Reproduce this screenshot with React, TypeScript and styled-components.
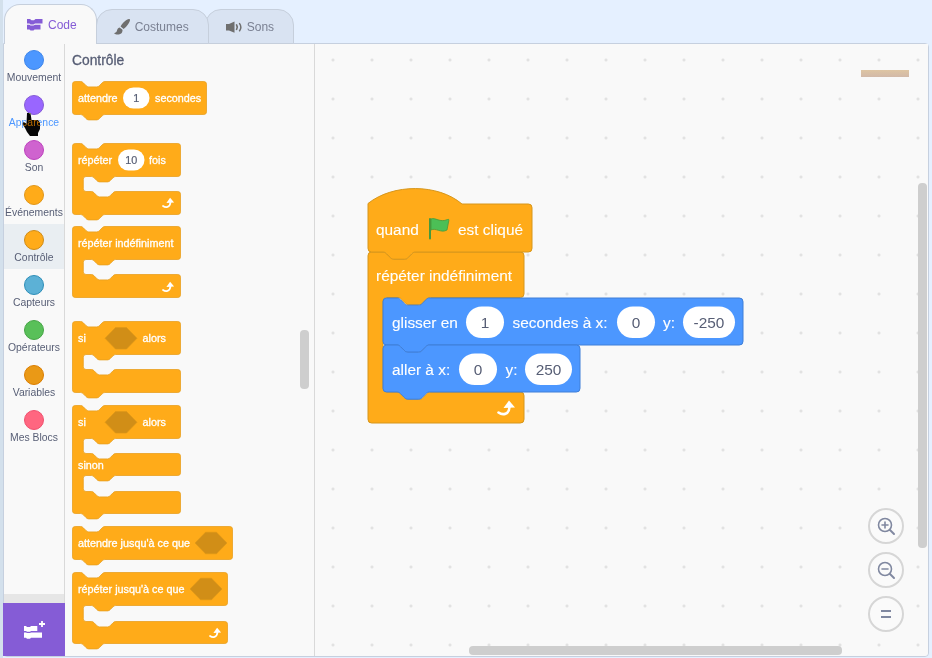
import React from "react";
import styled, { createGlobalStyle } from "styled-components";

const Global = createGlobalStyle`
  html, body { margin: 0; padding: 0; background: #e5f0ff; overflow: hidden; }
  * { box-sizing: border-box; }
`;

const FONT = `"Liberation Sans", Arial, Helvetica, sans-serif`;

const Page = styled.div`
  position: relative;
  width: 932px;
  height: 658px;
  display: flex;
  flex-direction: column;
  padding: 4px 3px 1px 0;
  border-left: 3px solid #d3e0ec;
  background: #e5f0ff;
  font-family: ${FONT};
  overflow: hidden;
`;
const TabBar = styled.div`
  display: flex;
  height: 39px;
  flex: none;
  padding-left: 1px;
  align-items: flex-end;
`;
const Tab = styled.div<{ $active?: boolean; $pl: number; $z: number; $ml: number }>`
  position: relative;
  z-index: ${(p) => p.$z};
  margin-left: ${(p) => p.$ml}px;
  height: ${(p) => (p.$active ? 40 : 35)}px;
  margin-bottom: -1px;
  padding: 0 19px 0 ${(p) => p.$pl}px;
  display: flex;
  align-items: center;
  gap: 5px;
  border: 1px solid #c6cfdc;
  border-bottom: ${(p) => (p.$active ? "none" : "1px solid #c6cfdc")};
  border-radius: 16px 16px 0 0;
  background: ${(p) => (p.$active ? "#f9f9f9" : "#d9e3f2")};
  color: ${(p) => (p.$active ? "#855cd6" : "#7a8092")};
  font-size: 12px;
  line-height: 14px;
`;
const TabIcon = styled.svg`
  width: 16px;
  height: 18px;
  flex: none;
`;
const Panel = styled.div`
  flex: 1;
  min-height: 0;
  display: grid;
  grid-template-columns: 61px 250px 1fr;
  border: 1px solid #c6d0df;
  border-radius: 0 4px 4px 4px;
  background: #f9f9f9;
`;
const CategoryColumn = styled.div`
  display: flex;
  flex-direction: column;
  border-right: 1px solid #d9d9d9;
  min-height: 0;
`;
const CategoryRow = styled.div<{ $selected?: boolean }>`
  height: 45px;
  flex: none;
  padding-top: 6px;
  display: flex;
  flex-direction: column;
  align-items: center;
  gap: 2px;
  background: ${(p) => (p.$selected ? "#e9eef2" : "transparent")};
`;
const CategoryDot = styled.div<{ $fill: string; $line: string }>`
  width: 20px;
  height: 20px;
  flex: none;
  border-radius: 50%;
  background: ${(p) => p.$fill};
  border: 1px solid ${(p) => p.$line};
`;
const CategoryLabel = styled.div<{ $hover?: boolean }>`
  font-size: 10.4px;
  line-height: 12px;
  white-space: nowrap;
  color: ${(p) => (p.$hover ? "#4c97ff" : "#575e75")};
`;
const Spacer = styled.div`
  flex: 1;
`;
const ExtensionTray = styled.div`
  height: 9px;
  flex: none;
  background: #e6e6e6;
`;
const ExtensionButton = styled.div`
  height: 53px;
  flex: none;
  margin: 0 -1px 0 -1px;
  background: #855cd6;
  display: flex;
  align-items: center;
  justify-content: center;
`;
const Palette = styled.div`
  position: relative;
  border-right: 1px solid #d9d9d9;
  padding: 9px 0 0 7px;
  display: flex;
  flex-direction: column;
  align-items: flex-start;
  overflow: hidden;
`;
const PaletteTitle = styled.div`
  height: 16px;
  font-size: 13.8px;
  line-height: 16px;
  color: #575e75;
  -webkit-text-stroke: 0.3px #575e75;
  margin-bottom: 12px;
`;
const PaletteItem = styled.svg<{ $gap: number }>`
  display: block;
  flex: none;
  overflow: visible;
  margin-top: ${(p) => p.$gap}px;
`;
const ScrollThumb = styled.div<{ $l: number; $t: number; $w: number; $h: number }>`
  position: absolute;
  left: ${(p) => p.$l}px;
  top: ${(p) => p.$t}px;
  width: ${(p) => p.$w}px;
  height: ${(p) => p.$h}px;
  border-radius: 4px;
  background: #cecece;
`;
const Workspace = styled.div`
  position: relative;
  overflow: hidden;
  background-color: #f9f9f9;
  background-image: radial-gradient(circle at center, #dcdcdc 1px, transparent 1.5px);
  background-size: 39px 39px;
  background-position: -1.5px -3.5px;
  border-radius: 0 0 4px 0;
`;
const Script = styled.svg`
  position: absolute;
  left: 53px;
  top: 136px;
  overflow: visible;
`;
const Backpack = styled.div`
  position: absolute;
  left: 546px;
  top: 26px;
  width: 48px;
  height: 7px;
  background: linear-gradient(#dec5a3, #d2b9a8);
`;
const ZoomStack = styled.div`
  position: absolute;
  left: 553px;
  top: 464px;
  display: flex;
  flex-direction: column;
  gap: 8px;
`;
const ZoomButton = styled.div`
  width: 36px;
  height: 36px;
  border-radius: 50%;
  border: 2px solid #d6d6d6;
  background: #fafafa;
  display: flex;
  align-items: center;
  justify-content: center;
`;
const ZoomIcon = styled.svg`
  width: 24px;
  height: 24px;
  fill: none;
  stroke: #8088a0;
  stroke-width: 1.6;
  stroke-linecap: round;
`;
const HandCursor = styled.svg`
  position: absolute;
  left: 19px;
  top: 113px;
  width: 18px;
  height: 23px;
  mix-blend-mode: difference;
`;
const Label = styled.text<{ $size: number }>`
  font-family: ${FONT};
  font-size: ${(p) => p.$size}px;
  fill: #fff;
  stroke: #fff;
  stroke-width: ${(p) => (p.$size < 12 ? 0.3 : 0.1)}px;
`;
const InputText = styled.text<{ $size: number }>`
  font-family: ${FONT};
  font-size: ${(p) => p.$size}px;
  fill: #575e75;
  stroke: #575e75;
  stroke-width: ${(p) => (p.$size < 12 ? 0.2 : 0)}px;
  text-anchor: middle;
`;

const P_SIZE = 10.8;
const W_SIZE = 15.4;

type Sec = { top: number; inner: number };
type Shape = {
  w: number;
  s: number;
  sections: Sec[];
  last?: number;
  bottomNotch?: boolean;
  hat?: boolean;
  ix?: number;
  off?: number;
};

const notchF = (n: number) =>
  `c${2 * n},0 ${3 * n},${1 * n} ${4 * n},${2 * n} l${4 * n},${4 * n} c${1 * n},${1 * n} ${2 * n},${2 * n} ${4 * n},${2 * n} h${12 * n} c${2 * n},0 ${3 * n},${-1 * n} ${4 * n},${-2 * n} l${4 * n},${-4 * n} c${1 * n},${-1 * n} ${2 * n},${-2 * n} ${4 * n},${-2 * n} `;
const notchB = (n: number) =>
  `c${-2 * n},0 ${-3 * n},${1 * n} ${-4 * n},${2 * n} l${-4 * n},${4 * n} c${-1 * n},${1 * n} ${-2 * n},${2 * n} ${-4 * n},${2 * n} h${-12 * n} c${-2 * n},0 ${-3 * n},${-1 * n} ${-4 * n},${-2 * n} l${-4 * n},${-4 * n} c${-1 * n},${-1 * n} ${-2 * n},${-2 * n} ${-4 * n},${-2 * n} `;

function blockPath({ w, s, sections, last = 0, bottomNotch = true, hat, ix = 16 * s, off = 12 * s }: Shape): string {
  const r = 4 * s;
  const n = s;
  const N = 36 * n;
  let d = "";
  if (hat) {
    d += `M0,15 C25,-5 70,-5 94,15.5 H${w - r} A${r},${r} 0 0 1 ${w},${15.5 + r} `;
  } else {
    d += `M0,${r} A${r},${r} 0 0 1 ${r},0 H${off} ${notchF(n)} H${w - r} A${r},${r} 0 0 1 ${w},${r} `;
  }
  let y = 0;
  sections.forEach((sec) => {
    y += sec.top;
    d += `V${y - r} A${r},${r} 0 0 1 ${w - r},${y} H${ix + off + N} ${notchB(n)} H${ix + r} A${r},${r} 0 0 0 ${ix},${y + r} `;
    y += sec.inner;
    d += `V${y - r} A${r},${r} 0 0 0 ${ix + r},${y} H${ix + off} ${notchF(n)} H${w - r} A${r},${r} 0 0 1 ${w},${y + r} `;
  });
  y += last;
  d += `V${y - r} A${r},${r} 0 0 1 ${w - r},${y} `;
  if (bottomNotch) d += `H${off + N} ${notchB(n)} `;
  d += `H${r} A${r},${r} 0 0 1 0,${y - r} Z`;
  return d;
}

const BlockBody: React.FC<Shape & { fill?: string; line?: string; lw?: number; x?: number; y?: number }> = ({
  fill = "#ffab19",
  line = "#e8a020",
  lw = 0.8,
  x = 0,
  y = 0,
  ...shape
}) => <path d={blockPath(shape)} transform={`translate(${x} ${y})`} fill={fill} stroke={line} strokeWidth={lw} />;

const Hex: React.FC<{ x: number; y: number }> = ({ x, y }) => (
  <polygon
    points={`${x},${y + 10.8} ${x + 10.5},${y} ${x + 21.5},${y} ${x + 32},${y + 10.8} ${x + 21.5},${y + 21.6} ${x + 10.5},${y + 21.6}`}
    fill="#d18e17"
    stroke="#dd9718"
    strokeWidth={0.6}
  />
);

const Pill: React.FC<{ x: number; y: number; w: number; h: number; text: string; size: number; baseline: number }> = ({
  x,
  y,
  w,
  h,
  text,
  size,
  baseline,
}) => (
  <g>
    <rect x={x} y={y} width={w} height={h} rx={h / 2} fill="#fff" />
    <InputText $size={size} x={x + w / 2} y={baseline}>
      {text}
    </InputText>
  </g>
);

const LoopArrow: React.FC<{ x: number; y: number; k?: number }> = ({ x, y, k = 0.675 }) => (
  <g transform={`translate(${x} ${y}) scale(${k})`}>
    <path d="M1.5,12.5 C5,15 12,15.5 12.5,7" fill="none" stroke="#fff" strokeWidth={2.6} strokeLinecap="round" />
    <path d="M6.5,8 L12,0.5 L18,7.5 Z" fill="#fff" />
  </g>
);

const PaletteBlock: React.FC<{ gap: number; w: number; h: number; children: React.ReactNode }> = ({ gap, w, h, children }) => (
  <PaletteItem $gap={gap} width={w + 1} height={h} viewBox={`-0.5 -0.5 ${w + 1} ${h}`}>
    {children}
  </PaletteItem>
);

const categories = [
  { name: "Mouvement", fill: "#4c97ff", line: "#3f86ea" },
  { name: "Apparence", fill: "#9966ff", line: "#855cd6", hover: true },
  { name: "Son", fill: "#cf63cf", line: "#bd42bd" },
  { name: "Événements", fill: "#ffab19", line: "#e0961a" },
  { name: "Contrôle", fill: "#ffab19", line: "#cf8b17", selected: true },
  { name: "Capteurs", fill: "#5cb1d6", line: "#2e8eb8" },
  { name: "Opérateurs", fill: "#59c059", line: "#46a546" },
  { name: "Variables", fill: "#ea9916", line: "#db7d00" },
  { name: "Mes Blocs", fill: "#ff6680", line: "#f0506e" },
];

export default function App() {
  const s = 0.675;
  const ws = 0.9;
  return (
    <>
      <Global />
      <Page>
        <TabBar>
          <Tab $active $pl={22} $z={3} $ml={0}>
            <TabIcon viewBox="0 -3 16 18">
              <path
                fill="#855cd6"
                d="M0,0 H3 L4.5,1.2 H7 L8.5,0 H15.5 V4.4 H8 L6.5,5.4 H3.5 L2.5,4.6 H0 Z M0,5.8 H2.5 L3.5,6.6 H6.5 L8,5.8 H13.5 V10.6 H7.5 L6.5,11.6 H3.5 L2.5,10.6 H0 Z"
              />
            </TabIcon>
            Code
          </Tab>
          <Tab $pl={17} $z={2} $ml={-1}>
            <TabIcon viewBox="0 0 16 18">
              <path
                fill="#6f6f6f"
                d="M15,1 C12.4,1.4 8.6,4.6 6.6,8.4 L9.6,11 C12.8,8.8 15.8,4.4 16,2 C16,1.4 15.6,1 15,1 Z M5.6,9.4 C3.8,9.8 3.2,11.2 3,12.6 C2.8,14 1.6,15 0,15.2 C1.8,17 6.4,17 8,14.4 C8.8,13 8.6,12 8.2,11.6 Z"
              />
            </TabIcon>
            Costumes
          </Tab>
          <Tab $pl={20} $z={1} $ml={-4}>
            <TabIcon viewBox="0 -2 16 18">
              <path fill="#6f6f6f" d="M0,4 H3 L8.5,1.5 V12.8 L3,10.4 H0 Z" />
              <path d="M10.6,5 C11.4,6.2 11.4,8.2 10.6,9.4" fill="none" stroke="#6f6f6f" strokeWidth={1.7} strokeLinecap="round" />
              <path d="M13.6,3.6 C15,5.6 15,8.8 13.6,10.8" fill="none" stroke="#6f6f6f" strokeWidth={1.5} strokeLinecap="round" />
            </TabIcon>
            Sons
          </Tab>
        </TabBar>
        <Panel>
          <CategoryColumn>
            {categories.map((c) => (
              <CategoryRow key={c.name} $selected={c.selected}>
                <CategoryDot $fill={c.fill} $line={c.line} />
                <CategoryLabel $hover={c.hover}>{c.name}</CategoryLabel>
              </CategoryRow>
            ))}
            <Spacer />
            <ExtensionTray />
            <ExtensionButton>
              <svg width="21" height="18" viewBox="24 618 21 18">
                <path fill="#fff" d="M24,623 h2 l1,1 h3 l1,-1 h6.3 v5 H31 l-1,0.7 h-3 l-1,-0.7 h-2 Z" />
                <path fill="#fff" d="M24,629.4 h2 l1,0.6 h3 l1,-0.6 H42 V634.8 H31 l-1,1 h-3 l-1,-1 h-2 Z" />
                <path d="M42,618 V624 M39,621 H45" stroke="#fff" strokeWidth={1.8} />
              </svg>
            </ExtensionButton>
          </CategoryColumn>

          <Palette>
            <PaletteTitle>Contrôle</PaletteTitle>

            <PaletteBlock gap={0} w={134} h={40}>
              <BlockBody w={134} s={s} sections={[]} last={33} />
              <Label $size={P_SIZE} x={5.5} y={20.3}>attendre</Label>
              <Pill x={50.5} y={6} w={26.5} h={21} text="1" size={P_SIZE} baseline={20.3} />
              <Label $size={P_SIZE} x={82.5} y={20.3}>secondes</Label>
            </PaletteBlock>

            <PaletteBlock gap={22} w={108} h={78}>
              <BlockBody w={108} s={s} sections={[{ top: 33, inner: 15 }]} last={23} />
              <Label $size={P_SIZE} x={5.5} y={20.3}>répéter</Label>
              <Pill x={45.5} y={6} w={26.5} h={21} text="10" size={P_SIZE} baseline={20.3} />
              <Label $size={P_SIZE} x={76.5} y={20.3}>fois</Label>
              <LoopArrow x={89.5} y={54} />
            </PaletteBlock>

            <PaletteBlock gap={5} w={108} h={73}>
              <BlockBody w={108} s={s} sections={[{ top: 33, inner: 15 }]} last={23} bottomNotch={false} />
              <Label $size={P_SIZE} x={5.5} y={20.3}>répéter indéfiniment</Label>
              <LoopArrow x={89.5} y={55} />
            </PaletteBlock>

            <PaletteBlock gap={22} w={108} h={78}>
              <BlockBody w={108} s={s} sections={[{ top: 33, inner: 15 }]} last={23} />
              <Label $size={P_SIZE} x={5.5} y={20.3}>si</Label>
              <Hex x={32.5} y={6} />
              <Label $size={P_SIZE} x={70} y={20.3}>alors</Label>
            </PaletteBlock>

            <PaletteBlock gap={6} w={108} h={116}>
              <BlockBody w={108} s={s} sections={[{ top: 33, inner: 15 }, { top: 22, inner: 16 }]} last={22} />
              <Label $size={P_SIZE} x={5.5} y={20.3}>si</Label>
              <Hex x={32.5} y={6} />
              <Label $size={P_SIZE} x={70} y={20.3}>alors</Label>
              <Label $size={P_SIZE} x={5.5} y={63}>sinon</Label>
            </PaletteBlock>

            <PaletteBlock gap={5} w={160} h={41}>
              <BlockBody w={160} s={s} sections={[]} last={33} />
              <Label $size={P_SIZE} x={5.5} y={20.3}>attendre jusqu'à ce que</Label>
              <Hex x={122.5} y={5.7} />
            </PaletteBlock>

            <PaletteBlock gap={5} w={155} h={78}>
              <BlockBody w={155} s={s} sections={[{ top: 33, inner: 16 }]} last={22} />
              <Label $size={P_SIZE} x={5.5} y={20.3}>répéter jusqu'à ce que</Label>
              <Hex x={117.5} y={5.7} />
              <LoopArrow x={136.5} y={55} />
            </PaletteBlock>

            <ScrollThumb $l={235} $t={286} $w={9} $h={59} />
          </Palette>

          <Workspace>
            <Script width={380} height={250} viewBox="368 180 380 250">
              <BlockBody x={368} y={252} w={156} s={ws} off={15} ix={15} sections={[{ top: 45.5, inner: 94.5 }]} last={31} bottomNotch={false} line="#d6961c" lw={1} />
              <BlockBody x={368} y={188.5} w={164} s={ws} off={15} hat sections={[]} last={63.5} line="#d6961c" lw={1} />
              <Label $size={W_SIZE} x={376} y={234.5}>quand</Label>
              <g transform="translate(429 218)">
                <path d="M2,1 C6,-1 11,5 18.5,1.5 C19.5,1 20,1.5 19.8,2.6 L18,12 C12,15.5 7,9.5 2,12 Z" fill="#4cbf56" stroke="#45993d" strokeWidth={0.8} />
                <path d="M1,1 V20.5" stroke="#45993d" strokeWidth={2} strokeLinecap="round" />
              </g>
              <Label $size={W_SIZE} x={458} y={234.5}>est cliqué</Label>
              <Label $size={W_SIZE} x={376} y={280.5}>répéter indéfiniment</Label>
              <LoopArrow x={497} y={400} k={1} />

              <BlockBody x={383} y={298} w={360} s={ws} off={14} sections={[]} last={47} fill="#4c97ff" line="#3f7fd8" lw={1} />
              <Label $size={W_SIZE} x={392} y={327.5}>glisser en</Label>
              <Pill x={466} y={306.5} w={38} h={31.5} text="1" size={W_SIZE} baseline={327.5} />
              <Label $size={W_SIZE} x={512.5} y={327.5}>secondes à x:</Label>
              <Pill x={617} y={306.5} w={38} h={31.5} text="0" size={W_SIZE} baseline={327.5} />
              <Label $size={W_SIZE} x={663} y={327.5}>y:</Label>
              <Pill x={683} y={306.5} w={52} h={31.5} text="-250" size={W_SIZE} baseline={327.5} />

              <BlockBody x={383} y={345} w={197} s={ws} off={14} sections={[]} last={47} fill="#4c97ff" line="#3f7fd8" lw={1} />
              <Label $size={W_SIZE} x={392} y={374.5}>aller à x:</Label>
              <Pill x={459} y={353.5} w={38} h={31.5} text="0" size={W_SIZE} baseline={374.5} />
              <Label $size={W_SIZE} x={505.5} y={374.5}>y:</Label>
              <Pill x={525} y={353.5} w={47} h={31.5} text="250" size={W_SIZE} baseline={374.5} />
            </Script>

            <Backpack />
            <ScrollThumb $l={603} $t={139} $w={9} $h={365} />
            <ScrollThumb $l={154} $t={602} $w={373} $h={9} />

            <ZoomStack>
              <ZoomButton>
                <ZoomIcon viewBox="0 0 24 24">
                  <circle cx="11" cy="11" r="6.5" />
                  <path d="M8,11 H14 M11,8 V14" />
                  <path d="M16,16 L20,20" strokeWidth={2} />
                </ZoomIcon>
              </ZoomButton>
              <ZoomButton>
                <ZoomIcon viewBox="0 0 24 24">
                  <circle cx="11" cy="11" r="6.5" />
                  <path d="M8,11 H14" />
                  <path d="M16,16 L20,20" strokeWidth={2} />
                </ZoomIcon>
              </ZoomButton>
              <ZoomButton>
                <ZoomIcon viewBox="0 0 24 24">
                  <path d="M7,9 H17 M7,15 H17" strokeWidth={2} strokeLinecap="butt" />
                </ZoomIcon>
              </ZoomButton>
            </ZoomStack>
          </Workspace>
        </Panel>
        <HandCursor viewBox="0 0 18 23">
          <path
            fill="#fff"
            d="M5,0 H8.5 L9.5,7 H16 L18,9.5 V16 L16,20 V23 H8 L5,19 L3,15 L0.5,11 L1.5,9 L4.5,10.5 Z"
          />
        </HandCursor>
      </Page>
    </>
  );
}
